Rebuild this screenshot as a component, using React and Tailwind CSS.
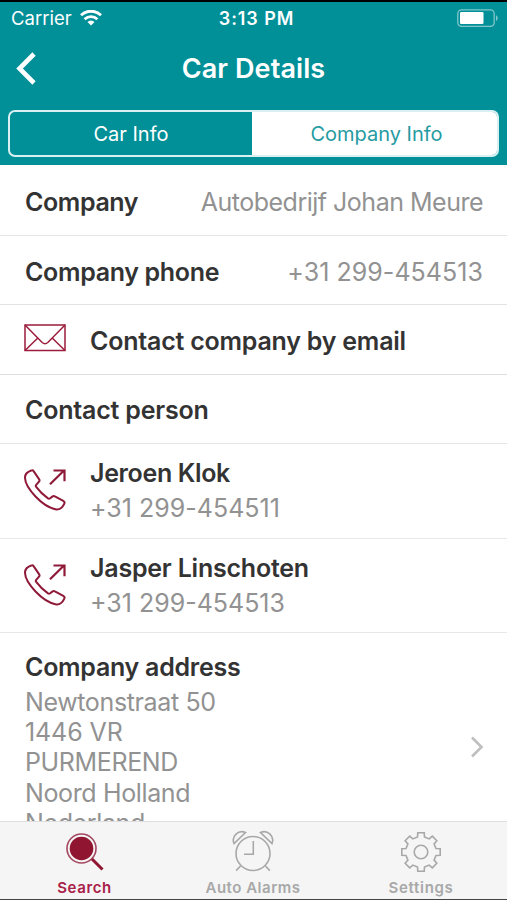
const gearPoints = Array.from({ length: 8 }, (_, i) => {
  const a = (i * Math.PI) / 4;
  return [[15, -3.5], [19.2, -3.2], [19.2, 3.2], [15, 3.5]]
    .map(([x, y]) => `${(x * Math.cos(a) - y * Math.sin(a)).toFixed(2)},${(x * Math.sin(a) + y * Math.cos(a)).toFixed(2)}`)
    .join(' ');
}).join(' ');

function WifiIcon() {
  return (
    <svg className="mb-[2px] ml-[8px] h-4 w-[22px]" viewBox="0 0 22 16" fill="none" stroke="#fff">
      <path d="M1 5.3a14.3 14.3 0 0 1 20 0" strokeWidth="3" />
      <path d="M4.6 9.3a9.2 9.2 0 0 1 12.8 0" strokeWidth="2.8" />
      <path d="M11 15.6 7.5 12.1a4.8 4.8 0 0 1 7 0Z" fill="#fff" stroke="none" />
    </svg>
  );
}

function BatteryIcon() {
  return (
    <svg className="h-[19px] w-[42px]" viewBox="0 0 42 19" fill="none">
      <rect x=".8" y=".8" width="36.4" height="16.6" rx="3.8" stroke="#7fc7cc" strokeWidth="1.3" />
      <rect x="3" y="3" width="23.5" height="12" rx="1.2" fill="#fff" />
      <path d="M39 6.2c2.3 1 2.3 4.8 0 5.8Z" fill="#7fc7cc" />
    </svg>
  );
}

function MailIcon() {
  return (
    <svg className="h-[28px] w-[42px] shrink-0" viewBox="0 0 42 28" fill="none" stroke="#9b1c3c" strokeWidth="1.5">
      <path d="M1 1h40v25.5H1Z" />
      <path d="m1 1 17.2 17.5c1.8 1.6 3.8 1.6 5.6 0L41 1M1 26.5l12.8-12.5M41 26.5 28.2 14" />
    </svg>
  );
}

function CallIcon() {
  return (
    <svg className="h-[42px] w-[42px] shrink-0" viewBox="0 0 42 42" fill="none" stroke="#8f1a38" strokeWidth="2" strokeLinejoin="round">
      <path d="M7.3 1.5C8.2 1 9.1 1.300 9.6 2.100L15.2 10.400C15.7 11.200 15.6 12 15 12.700L12.2 15.900C11.700 16.500 11.700 17.300 12.200 17.900C15.600 22.500 19.500 26.300 24 29.400C24.800 29.900 25.500 29.800 26.200 29.200L28.600 27.400C29.300 26.900 30.100 26.800 30.900 27.300L39.300 31.900C40.600 32.600 40.900 33.600 40.200 34.900C38.500 38.500 35.600 40.700 32.300 40.400C18.400 38.100 1.200 18.700 1 8.800C.9 5.500 3.300 2.900 7.300 1.500Z" />
      <path d="M26 15.3 40 1.5M29.5 1.5H40.5V12.2" strokeLinejoin="miter" strokeWidth="2.2" />
    </svg>
  );
}

function Person({ name, phone, nameClass, phoneClass, rowClass }) {
  return (
    <div className={`flex items-start border-b border-[#e8e8e8] pl-[24px] ${rowClass}`}>
      <div className="pt-[25px]"><CallIcon /></div>
      <div className="ml-6 pt-[12px]">
        <div className={`text-[25px] leading-[34px] font-semibold text-[#333] ${nameClass}`}>{name}</div>
        <div className={`text-[25px] leading-[36px] text-[#929292] ${phoneClass}`}>{phone}</div>
      </div>
    </div>
  );
}

export default function App() {
  return (
    <div className="flex h-[900px] w-[507px] flex-col overflow-hidden border-t-2 border-b border-t-black border-b-[#444] bg-white font-[Inter,'Liberation_Sans',sans-serif] whitespace-nowrap">
      <header className="h-[163px] shrink-0 bg-[#029098] text-white">
        <div className="grid h-[33px] grid-cols-[1fr_auto_1fr] items-center pr-[8px] pl-[11px]">
          <div className="flex items-center">
            <span className="text-[18.5px]">Carrier</span>
            <WifiIcon />
          </div>
          <div className="pl-[3px] text-[18px] font-semibold tracking-[0.9px]">3:13 PM</div>
          <div className="flex justify-end"><BatteryIcon /></div>
        </div>
        <div className="grid h-[74px] grid-cols-[1fr_auto_1fr] items-center px-4 pb-[6px]">
          <svg className="h-[34px] w-[22px]" viewBox="0 0 22 34" fill="none" stroke="#fff" strokeWidth="4.6">
            <path d="M18 2 3.500 16.500 18 31" />
          </svg>
          <h1 className="text-[27px] font-semibold tracking-[0.1px]">Car Details</h1>
          <span />
        </div>
        <div className="mx-[8px] mt-[1px] flex h-[47px] overflow-hidden rounded-[7px] border-2 border-[#d8f0f1] text-[20px]">
          <div className="flex w-[242px] items-center justify-center">Car Info</div>
          <div className="flex flex-1 items-center justify-center bg-white pl-[4px] text-[#259ba2]">Company Info</div>
        </div>
      </header>

      <main className="min-h-0 flex-1 overflow-hidden text-[25px]">
        <div className="flex h-[71px] items-center justify-between border-b border-[#e6e6e6] pt-[5px] pr-6 pl-[25px]">
          <span className="font-semibold tracking-[-0.4px] text-[#333]">Company</span>
          <span className="tracking-[-0.5px] text-[#929292]">Autobedrijf Johan Meure</span>
        </div>
        <div className="flex h-[69px] items-center justify-between border-b border-[#e3e3e3] pt-[5px] pr-6 pl-[25px]">
          <span className="font-semibold tracking-[-0.33px] text-[#333]">Company phone</span>
          <span className="tracking-[0.05px] text-[#929292]">+31 299-454513</span>
        </div>
        <div className="flex h-[70px] items-center border-b border-[#dedede] pl-[24px]">
          <div className="pb-1"><MailIcon /></div>
          <span className="ml-6 pt-[4px] font-semibold tracking-[-0.22px] text-[#333]">Contact company by email</span>
        </div>
        <div className="flex h-[69px] items-center border-b border-[#e6e6e6] pt-[4px] pl-[25px]">
          <span className="font-semibold tracking-[-0.2px] text-[#333]">Contact person</span>
        </div>
        <Person name="Jeroen Klok" phone="+31 299-454511" rowClass="h-[95px]" nameClass="tracking-[-0.35px]" phoneClass="tracking-[0.02px]" />
        <Person name="Jasper Linschoten" phone="+31 299-454513" rowClass="h-[94px]" nameClass="tracking-[-0.22px]" phoneClass="tracking-[0px]" />
        <div className="flex justify-between pt-[16px] pr-[23px] pl-[25px]">
          <div>
            <div className="leading-[36px] font-semibold tracking-[-0.27px] text-[#333]">Company address</div>
            <div className="pt-[2px] leading-[30.2px] tracking-[-0.37px] text-[#929292]">
              <div>Newtonstraat 50</div>
              <div className="tracking-[-0.1px]">1446 VR</div>
              <div>PURMEREND</div>
              <div>Noord Holland</div>
              <div>Nederland</div>
            </div>
          </div>
          <svg className="mt-[87px] h-[22px] w-[14px]" viewBox="0 0 14 22" fill="none" stroke="#bfbfbf" strokeWidth="2.6">
            <path d="m2 1.500 9.500 9.500L2 20.500" />
          </svg>
        </div>
      </main>

      <nav className="grid h-[78px] shrink-0 grid-cols-[169px_168px_168px] border-t border-[#dedede] bg-[#f5f5f5] text-[15px] font-semibold text-[#a8a8a8]">
        <div className="flex flex-col items-center pt-[8px] text-[#a92048]">
          <svg className="h-[44px] w-[44px] shrink-0" viewBox="0 0 44 44" fill="none">
            <circle cx="18.500" cy="18.500" r="14.500" stroke="#a34860" strokeWidth="1.600" />
            <circle cx="18.500" cy="18.500" r="11.800" fill="#8f1530" />
            <path d="m29 29 10.500 10.500" stroke="#8f1530" strokeWidth="3" />
          </svg>
          <span className="mt-[5px] leading-[18px] tracking-[0.6px]">Search</span>
        </div>
        <div className="flex flex-col items-center pt-[8px]">
          <svg className="h-[44px] w-[44px] shrink-0" viewBox="0 0 44 44" fill="none" stroke="#a8a8a8" strokeWidth="1.600">
            <circle cx="22" cy="23.500" r="17" />
            <path d="M22.300 11v13.300H13M9.500 36l-4.300 4.600M34.500 36l4.300 4.600M3 13.500C0 6 7.500-.5 14.500 2.500ZM41 13.500C44 6 36.500-.5 29.500 2.500Z" />
          </svg>
          <span className="mt-[5px] leading-[18px] tracking-[0.5px]">Auto Alarms</span>
        </div>
        <div className="flex flex-col items-center pt-[8px]">
          <svg className="h-[44px] w-[44px] shrink-0" viewBox="-22 -22 44 44" fill="none" stroke="#a8a8a8" strokeWidth="1.600">
            <polygon points={gearPoints} />
            <circle r="6.800" />
          </svg>
          <span className="mt-[5px] leading-[18px] tracking-[0.7px]">Settings</span>
        </div>
      </nav>
    </div>
  );
}
